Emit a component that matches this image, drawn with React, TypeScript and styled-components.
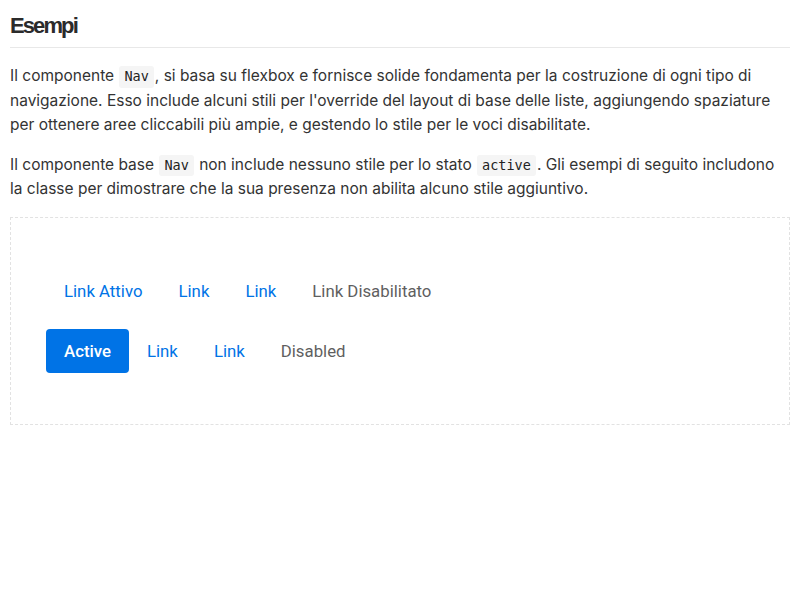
import React from "react";
import styled, { createGlobalStyle } from "styled-components";

const Global = createGlobalStyle`
  html, body { margin: 0; padding: 0; background: #fff; }
  body { font-family: Inter, "Noto Sans", sans-serif; color: #333; }
`;

const Page = styled.div`
  padding: 0 10px;
`;

const Title = styled.h2`
  margin: 0;
  padding: 12px 0 7px;
  font-family: "Liberation Sans", Arial, sans-serif;
  font-weight: 700;
  font-size: 22px;
  letter-spacing: -1.9px;
  line-height: 28px;
  color: #2b2b2b;
  border-bottom: 1px solid #e8e8e8;
`;

const Para = styled.p`
  margin: 16px 0 0;
  font-size: 15.5px;
  line-height: 24.5px;
  & + & { margin-top: 15px; }
`;

const Code = styled.code`
  font-family: "DejaVu Sans Mono", monospace;
  font-size: 13.5px;
  line-height: 1;
  display: inline-block;
  background: #f5f5f5;
  border-radius: 3px;
  padding: 4px 5px;
  margin: 0 1px;
  color: #222;
`;

const Example = styled.div`
  margin-top: 15px;
  border: 1px dashed #e2e2e2;
  padding: 51px 35px 51px;
  display: flex;
  flex-direction: column;
  gap: 16px;
`;

const Nav = styled.ul`
  list-style: none;
  margin: 0;
  padding: 0;
  display: flex;
`;

const NavLink = styled.a<{ $active?: boolean; $disabled?: boolean }>`
  display: block;
  height: 44px;
  line-height: 44px;
  padding: 0 18px;
  border-radius: 4px;
  font-family: Roboto, "Open Sans", sans-serif;
  font-size: 16.8px;
  text-decoration: none;
  color: ${(p) => (p.$active ? "#fff" : p.$disabled ? "#5f5f5f" : "#0073e6")};
  background: ${(p) => (p.$active ? "#0073e6" : "transparent")};
  font-weight: ${(p) => (p.$active ? 500 : 400)};
`;

export default function App() {
  return (
    <Page>
      <Global />
      <Title>Esempi</Title>
      <Para>
        Il componente <Code>Nav</Code>, si basa su flexbox e fornisce solide fondamenta per la costruzione di ogni tipo di
        navigazione. Esso include alcuni stili per l'override del layout di base delle liste, aggiungendo spaziature
        per ottenere aree cliccabili più ampie, e gestendo lo stile per le voci disabilitate.
      </Para>
      <Para>
        Il componente base <Code>Nav</Code> non include nessuno stile per lo stato <Code>active</Code>. Gli esempi di seguito includono
        la classe per dimostrare che la sua presenza non abilita alcuno stile aggiuntivo.
      </Para>
      <Example>
        <Nav>
          <li><NavLink href="#">Link Attivo</NavLink></li>
          <li><NavLink href="#">Link</NavLink></li>
          <li><NavLink href="#">Link</NavLink></li>
          <li><NavLink $disabled>Link Disabilitato</NavLink></li>
        </Nav>
        <Nav>
          <li><NavLink $active href="#">Active</NavLink></li>
          <li><NavLink href="#">Link</NavLink></li>
          <li><NavLink href="#">Link</NavLink></li>
          <li><NavLink $disabled>Disabled</NavLink></li>
        </Nav>
      </Example>
    </Page>
  );
}
